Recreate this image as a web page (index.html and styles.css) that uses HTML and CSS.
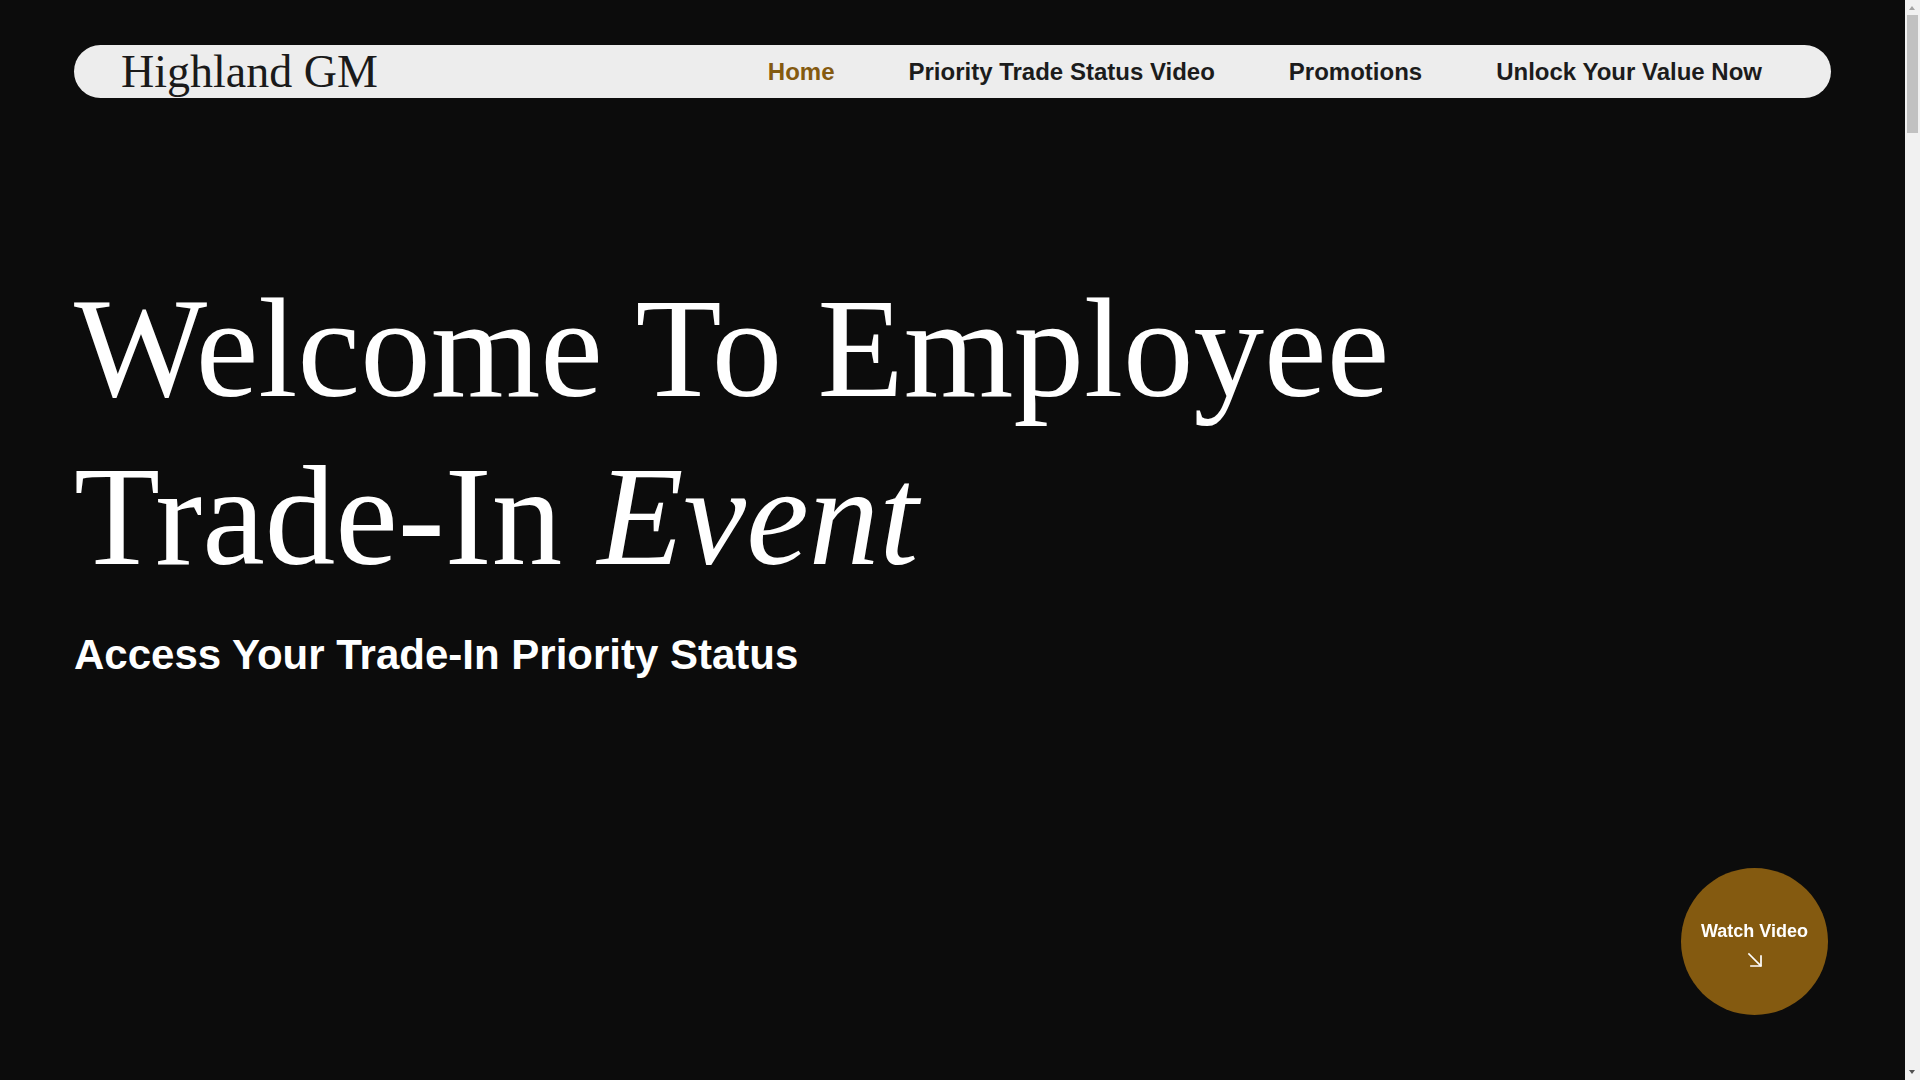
FILE: index.html
```html
<!DOCTYPE html>
<html lang="en">
<head>
<meta charset="utf-8">
<title>Highland GM – Employee Trade-In Event</title>
<link rel="stylesheet" href="styles.css">
</head>
<body>
<div class="page">
  <header class="navbar">
    <div class="logo">Highland GM</div>
    <nav class="links">
      <a class="link active" href="#">Home</a>
      <a class="link" href="#">Priority Trade Status Video</a>
      <a class="link" href="#">Promotions</a>
      <a class="link" href="#">Unlock Your Value Now</a>
    </nav>
  </header>
  <section class="hero">
    <h1 class="title">Welcome To Employee<br>Trade-In <em>Event</em></h1>
    <h2 class="subtitle">Access Your Trade-In Priority Status</h2>
  </section>
</div>
<a class="watch" href="#">
  <span class="watch-label">Watch Video</span>
  <svg class="watch-arrow" width="16" height="16" viewBox="0 0 16 16" fill="none" stroke="#ffffff" stroke-width="1.7" stroke-linecap="square">
    <path d="M2 2 L13.5 13.5"/>
    <path d="M4 14 H14 V4"/>
  </svg>
</a>
<div class="scrollbar" aria-hidden="true">
  <span class="sb-up"></span>
  <span class="sb-thumb"></span>
  <span class="sb-down"></span>
</div>
</body>
</html>
```
FILE: styles.css
```css
html, body {
  margin: 0;
  padding: 0;
  background: #0c0c0c;
}

body {
  font-family: "Liberation Sans", Arial, sans-serif;
  color: #ffffff;
  overflow: hidden;
}

.page {
  padding: 0 89px 0 74px;
}

.navbar {
  margin-top: 45px;
  height: 53px;
  background: #ededed;
  border-radius: 27px;
  display: flex;
  align-items: center;
  justify-content: space-between;
  padding: 0 69px 0 47px;
}

.logo {
  font-family: "Liberation Serif", "Times New Roman", serif;
  font-size: 46px;
  line-height: 1;
  color: #1a1a1a;
}

.links {
  display: flex;
  align-items: center;
  gap: 74px;
}

.link {
  font-family: "Liberation Sans", Arial, sans-serif;
  font-weight: 700;
  font-size: 24px;
  line-height: 1;
  color: #1c1c1c;
  text-decoration: none;
}

.link.active {
  color: #845a10;
}

.hero {
  padding-top: 166px;
}

.title {
  margin: 0;
  font-family: "Liberation Serif", "Times New Roman", serif;
  font-weight: 400;
  font-size: 141px;
  line-height: 168px;
  color: #ffffff;
}

.title em {
  font-style: italic;
}

.subtitle {
  margin: 31px 0 0;
  font-family: "Liberation Sans", Arial, sans-serif;
  font-weight: 700;
  font-size: 42px;
  line-height: normal;
  color: #ffffff;
}

.watch {
  position: fixed;
  right: 92px;
  bottom: 65px;
  width: 147px;
  height: 147px;
  box-sizing: border-box;
  padding-top: 7px;
  border-radius: 50%;
  background: #845a10;
  color: #ffffff;
  text-decoration: none;
  display: flex;
  flex-direction: column;
  align-items: center;
  justify-content: center;
  gap: 12px;
}

.watch-label {
  font-weight: 700;
  font-size: 18px;
  line-height: 1;
}

.watch-arrow {
  display: block;
}

.scrollbar {
  position: fixed;
  top: 0;
  right: 0;
  bottom: 0;
  width: 15px;
  background: #f1f1f1;
}

.sb-up,
.sb-down {
  position: absolute;
  left: 4px;
  width: 0;
  height: 0;
  border-left: 3.5px solid transparent;
  border-right: 3.5px solid transparent;
}

.sb-up {
  top: 6px;
  border-bottom: 4px solid #a3a3a3;
}

.sb-down {
  bottom: 6px;
  border-top: 4px solid #505050;
}

.sb-thumb {
  position: absolute;
  top: 15px;
  left: 2px;
  width: 11px;
  height: 118px;
  background: #c1c1c1;
}
```
